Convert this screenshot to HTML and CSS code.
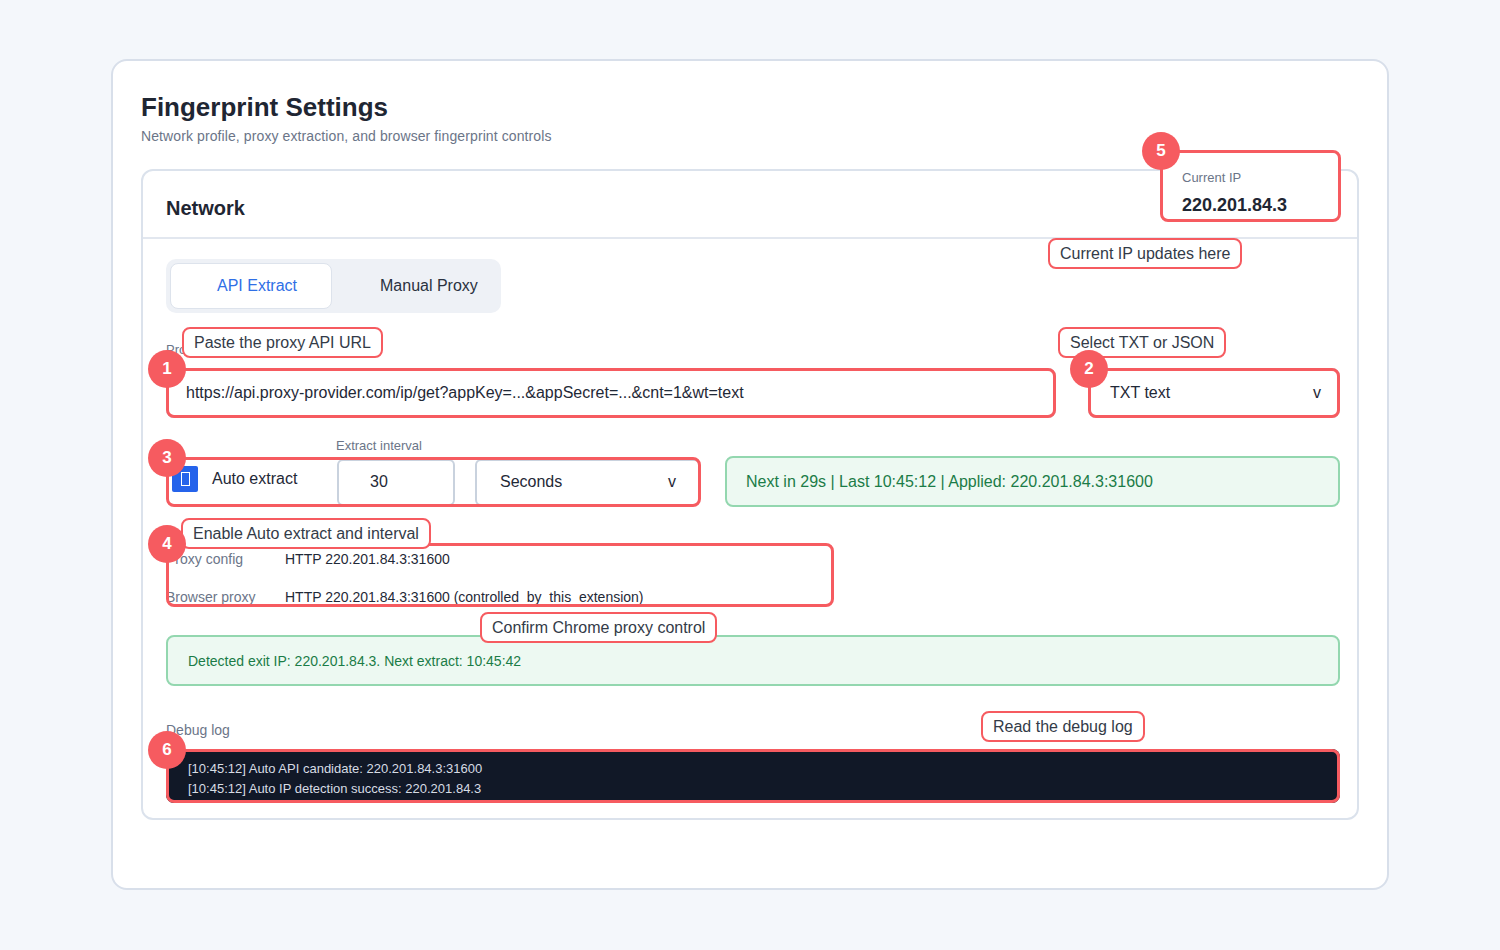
FILE: index.html
```html
<!DOCTYPE html>
<html lang="en">
<head>
    <meta charset="UTF-8">
    <meta name="viewport" content="width=device-width, initial-scale=1.0">
    <title>Fingerprint Settings</title>
    <link rel="stylesheet" href="styles.css">
</head>
<body>
    <div class="page">
        <h1>Fingerprint Settings</h1>
        <p class="subtitle">Network profile, proxy extraction, and browser fingerprint controls</p>

        <section class="panel">
            <div class="panel-head">
                <h2>Network</h2>
                <!-- Current IP -->
                <div class="mark mark-ip">
                    <div class="ip-box">
                        <div class="ip-label">Current IP</div>
                        <div class="ip-value">220.201.84.3</div>
                    </div>
                    <span class="hl"></span>
                    <span class="badge">5</span>
                    <span class="callout callout-ip">Current IP updates here</span>
                </div>
            </div>

            <div class="panel-body">
                <div class="tabs">
                    <button class="tab tab-active">API Extract</button>
                    <button class="tab tab-manual">Manual Proxy</button>
                </div>

                <!-- API URL + format -->
                <div class="url-row">
                    <div class="field">
                        <div class="field-label">Proxy API URL</div>
                        <div class="mark">
                            <div class="input">https://api.proxy-provider.com/ip/get?appKey=...&amp;appSecret=...&amp;cnt=1&amp;wt=text</div>
                            <span class="hl"></span>
                            <span class="badge">1</span>
                            <span class="callout callout-url">Paste the proxy API URL</span>
                        </div>
                    </div>
                    <div class="field">
                        <div class="field-label">API response</div>
                        <div class="mark">
                            <div class="input select"><span>TXT text</span><span>v</span></div>
                            <span class="hl"></span>
                            <span class="badge">2</span>
                            <span class="callout callout-format">Select TXT or JSON</span>
                        </div>
                    </div>
                </div>

                <!-- Auto extract -->
                <div class="auto-row">
                    <div class="auto-col">
                        <div class="field-label interval-label">Extract interval</div>
                        <div class="mark">
                            <div class="auto-group">
                                <label class="check-label"><span class="check"></span>Auto extract</label>
                                <div class="small-input">30</div>
                                <div class="small-select"><span>Seconds</span><span>v</span></div>
                            </div>
                            <span class="hl"></span>
                            <span class="badge">3</span>
                            <span class="callout callout-auto">Enable Auto extract and interval</span>
                        </div>
                    </div>
                    <div class="status">Next in 29s | Last 10:45:12 | Applied: 220.201.84.3:31600</div>
                </div>

                <!-- Proxy info -->
                <div class="mark kv-mark">
                    <div class="kv">
                        <div class="kv-row"><span class="kv-key">Proxy config</span><span>HTTP 220.201.84.3:31600</span></div>
                        <div class="kv-row"><span class="kv-key">Browser proxy</span><span>HTTP 220.201.84.3:31600 (controlled_by_this_extension)</span></div>
                    </div>
                    <span class="hl"></span>
                    <span class="badge">4</span>
                    <span class="callout callout-chrome">Confirm Chrome proxy control</span>
                </div>

                <div class="detected">Detected exit IP: 220.201.84.3. Next extract: 10:45:42</div>

                <div class="debug-label">Debug log</div>
                <div class="mark log-mark">
                    <div class="log">
                        <div>[10:45:12] Auto API candidate: 220.201.84.3:31600</div>
                        <div>[10:45:12] Auto IP detection success: 220.201.84.3</div>
                    </div>
                    <span class="hl"></span>
                    <span class="badge">6</span>
                    <span class="callout callout-log">Read the debug log</span>
                </div>
            </div>
        </section>
    </div>
</body>
</html>
```

FILE: styles.css
```css
body {
    margin: 0;
    font-family: "Liberation Sans", Arial, sans-serif;
    background-color: #f4f7fb;
    color: #1f2937;
}
.page {
    width: 1278px;
    box-sizing: border-box;
    margin: 59px auto 0;
    padding: 30px 28px 68px;
    background-color: #fff;
    border: 2px solid #d8dfea;
    border-radius: 16px;
}
h1 {
    margin: 0;
    font-size: 26px;
    line-height: 32px;
    color: #1f2633;
}
.subtitle {
    margin: 3px 0 0;
    font-size: 14px;
    line-height: 20px;
    color: #6b7588;
    letter-spacing: 0.1px;
}
.panel {
    margin-top: 23px;
    border: 2px solid #dbe2ec;
    border-radius: 12px;
}
.panel-head {
    display: flex;
    justify-content: space-between;
    align-items: flex-start;
    height: 66px;
    padding: 0 16px 0 23px;
    border-bottom: 2px solid #e2e7ef;
}
.panel-head h2 {
    margin: 25px 0 0;
    font-size: 20px;
    line-height: 24px;
    color: #1f2633;
}
.panel-body {
    padding: 20px 17px 15px 23px;
}

/* annotation layer */
.mark {
    position: relative;
}
.hl {
    position: absolute;
    inset: 0;
    border: 3px solid #f65b60;
    border-radius: 8px;
    pointer-events: none;
    z-index: 2;
}
.badge {
    position: absolute;
    left: -18px;
    top: -18px;
    width: 38px;
    height: 38px;
    border-radius: 50%;
    background-color: #f65b60;
    color: #fff;
    font-size: 17px;
    font-weight: bold;
    line-height: 38px;
    text-align: center;
    z-index: 4;
}
.callout {
    position: absolute;
    white-space: nowrap;
    padding: 0 10px;
    font-size: 16px;
    line-height: 27px;
    color: #333b48;
    background-color: #fff;
    border: 2px solid #f65b60;
    border-radius: 8px;
    z-index: 3;
}
.callout-ip { left: -112px; top: 88px; }
.callout-url { left: 16px; top: -41px; }
.callout-format { left: -30px; top: -41px; }
.callout-auto { left: 15px; top: 61px; }
.callout-chrome { left: 314px; top: 69px; }
.callout-log { left: 815px; top: -38px; }

/* current ip */
.mark-ip {
    margin-top: -21px;
}
.ip-box {
    width: 181px;
    height: 72px;
    box-sizing: border-box;
    padding: 20px 0 0 22px;
    background-color: #fff;
    border-radius: 8px;
}
.ip-label {
    font-size: 13px;
    line-height: 16px;
    color: #6b7588;
}
.ip-value {
    margin-top: 8px;
    font-size: 18px;
    line-height: 22px;
    font-weight: bold;
    color: #1f2633;
}

/* tabs */
.tabs {
    display: flex;
    width: 335px;
    height: 54px;
    box-sizing: border-box;
    padding: 4px;
    background-color: #eef1f6;
    border-radius: 10px;
}
.tab {
    font-family: inherit;
    font-size: 16px;
    text-align: left;
    background: none;
    border: 1px solid transparent;
    border-radius: 8px;
    color: #2a3140;
    padding: 0;
}
.tab-active {
    width: 162px;
    padding-left: 46px;
    background-color: #fff;
    border-color: #dde3ec;
    color: #2f6fe6;
}
.tab-manual {
    width: 165px;
    padding-left: 47px;
}

/* fields */
.url-row {
    display: grid;
    grid-template-columns: 1fr 252px;
    column-gap: 32px;
    margin-top: 29px;
}
.field-label {
    font-size: 13px;
    line-height: 16px;
    color: #6b7588;
    margin-bottom: 10px;
}
.input {
    height: 50px;
    box-sizing: border-box;
    display: flex;
    align-items: center;
    padding: 0 18px;
    font-size: 16px;
    border: 2px solid #c9d2de;
    border-radius: 8px;
    white-space: nowrap;
}
.select {
    justify-content: space-between;
    padding: 0 17px 0 20px;
}

/* auto extract */
.auto-row {
    display: grid;
    grid-template-columns: 535px 1fr;
    column-gap: 24px;
    align-items: end;
    margin-top: 20px;
}
.interval-label {
    margin: 0 0 3px 170px;
}
.auto-group {
    display: flex;
    align-items: center;
    height: 50px;
}
.check-label {
    display: flex;
    align-items: center;
    gap: 14px;
    width: 171px;
    padding-left: 6px;
    box-sizing: border-box;
    margin-bottom: 7px;
    font-size: 16px;
}
.check {
    width: 26px;
    height: 26px;
    background-color: #2563eb;
    border-radius: 2px;
    display: flex;
    align-items: center;
    justify-content: center;
}
.check::after {
    content: "";
    width: 7px;
    height: 12px;
    border: 1px solid #fff;
}
.small-input,
.small-select {
    height: 47px;
    box-sizing: border-box;
    display: flex;
    align-items: center;
    font-size: 16px;
    border: 2px solid #c9d2de;
    border-radius: 6px;
}
.small-input {
    width: 118px;
    padding-left: 31px;
}
.small-select {
    width: 225px;
    margin-left: 20px;
    justify-content: space-between;
    padding: 0 22px 0 23px;
}
.status {
    height: 51px;
    box-sizing: border-box;
    display: flex;
    align-items: center;
    padding: 0 19px;
    font-size: 16px;
    color: #1b7c47;
    background-color: #edf9f2;
    border: 2px solid #93d7af;
    border-radius: 8px;
}

/* proxy info */
.kv-mark {
    width: 668px;
    margin-top: 36px;
}
.kv {
    height: 64px;
    box-sizing: border-box;
    padding-top: 7px;
    display: flex;
    flex-direction: column;
    gap: 20px;
}
.kv-row {
    display: grid;
    grid-template-columns: 119px 1fr;
    font-size: 14px;
    line-height: 18px;
    white-space: nowrap;
}
.kv-key {
    color: #6b7588;
}
.detected {
    margin-top: 28px;
    height: 51px;
    box-sizing: border-box;
    display: flex;
    align-items: center;
    padding: 0 20px;
    font-size: 14px;
    color: #1b7c47;
    background-color: #edf9f2;
    border: 2px solid #93d7af;
    border-radius: 8px;
}
.debug-label {
    margin-top: 35px;
    font-size: 14px;
    line-height: 18px;
    color: #6b7588;
}
.log-mark {
    margin-top: 10px;
}
.log {
    height: 54px;
    box-sizing: border-box;
    padding: 10px 22px 0;
    font-size: 13px;
    line-height: 20px;
    color: #d7dce4;
    background-color: #111827;
    border-radius: 8px;
}
```
